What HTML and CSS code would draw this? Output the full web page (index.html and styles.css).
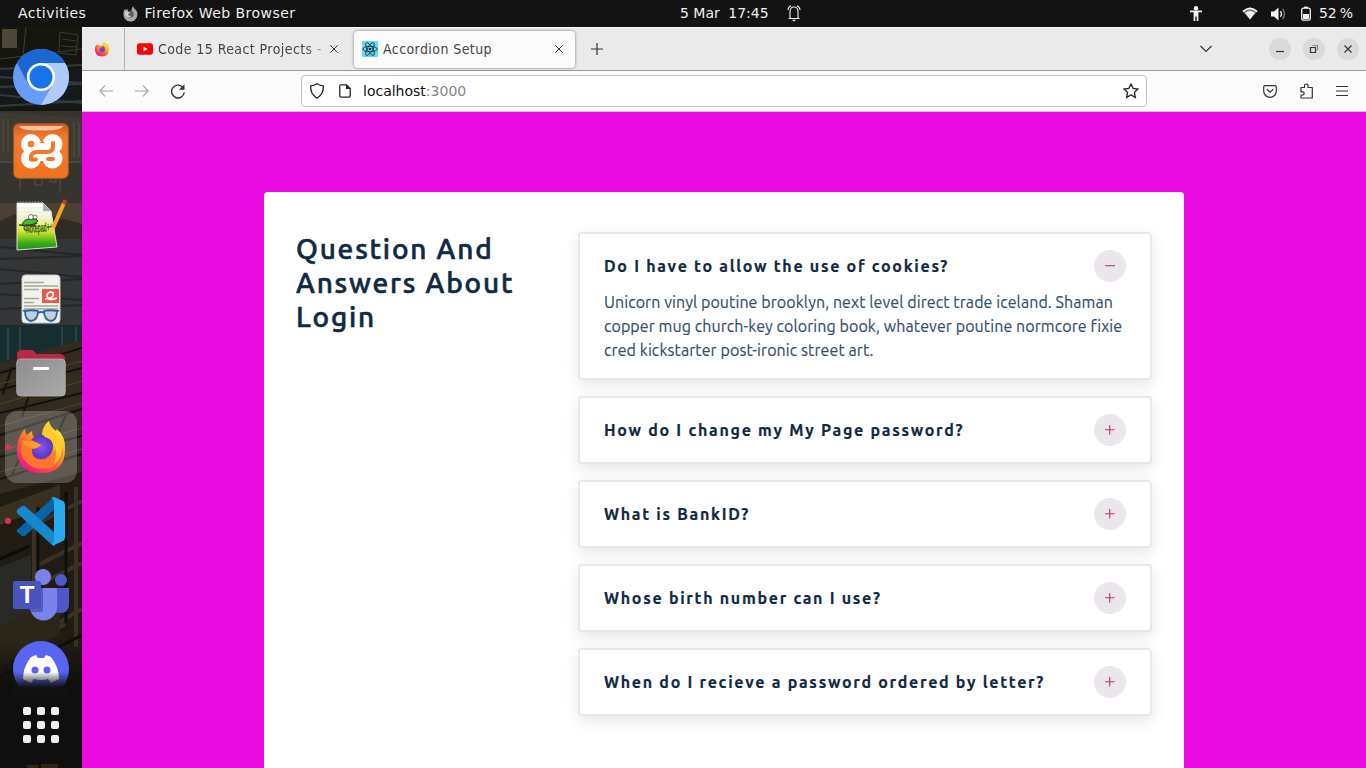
FILE: index.html
```html
<!DOCTYPE html>
<html lang="en">
<head>
<meta charset="utf-8">
<title>Accordion Setup</title>
<link rel="stylesheet" href="styles.css">
</head>
<body>
<div class="desktop">
  <header class="topbar">
    <div class="topbar-left">
      <span class="activities">Activities</span>
      <svg class="app-icon" width="16" height="16" viewBox="0 0 56 56"><path d="M5 29Q4 18 11 9l2 7q4-3 6-6l2 8q6-3 12 0-2-10 6-17 2 8 8 11 8 7 7 19a24 24 0 0 1-49-2z" fill="#a8a8a8"/><circle cx="29" cy="29" r="12" fill="#5b5b5b"/><path d="M11 19q9-3 18 6-5 3-9 2 2 9 13 8-9 9-18 1-7-7-4-17z" fill="#d0d0d0"/></svg>
      <span class="app-name">Firefox Web Browser</span>
    </div>
    <div class="topbar-center">
      <span class="clock">5 Mar <span class="time">17:45</span></span>
      <svg class="bell" width="14" height="17" viewBox="0 0 14 17" fill="none" stroke="#eee" stroke-width="1.1"><path d="M1.500 13.500h11M3 13V7q0-5 4-5t4 5v6M1 5q0-3 3-4.300M13 5q0-3-3-4.300"/><path d="M5.300 14.800h3.400q-.4 1.500-1.700 1.500t-1.700-1.500z" fill="#eee" stroke="none"/></svg>
    </div>
    <div class="topbar-right">
      <svg width="12" height="15" viewBox="0 0 12 15" fill="#f2f2f2"><circle cx="6" cy="2.200" r="2.200"/><path d="M0 4.600h12v1.700H8.400V15H6.700v-4.500H5.300V15H3.600V6.300H0z"/></svg>
      <svg class="wifi" width="16" height="13" viewBox="0 0 16 13"><path d="M.4 4Q8-3 15.600 4L8 12.600z" fill="#777"/><path d="M.4 4Q8-3 15.600 4l-1 1.200Q8-.5 1.400 5.200zM3 5.800q5-3.700 10 0L8 12.600z" fill="#f2f2f2"/></svg>
      <svg class="sound" width="15" height="14" viewBox="0 0 15 14"><path d="M0 4.500h3L7.500.5v13L3 9.500H0z" fill="#f2f2f2"/><path d="M9.500 4.200q2 2.800 0 5.600" fill="none" stroke="#eee" stroke-width="1.300"/><path d="M11.700 2q3.600 5 0 10" fill="none" stroke="#777" stroke-width="1.300"/></svg>
      <svg class="battery" width="10" height="15" viewBox="0 0 10 15"><path d="M3 .6h4v1.500h-4z" fill="#f2f2f2"/><rect x=".7" y="2.200" width="8.600" height="12" rx="1.700" fill="none" stroke="#f2f2f2" stroke-width="1.300"/><path d="M2 8h6v5H2z" fill="#f2f2f2"/></svg>
      <span class="percent">52 %</span>
    </div>
  </header>

  <div class="workspace">
    <nav class="dock">
      <svg class="wallpaper" width="82" height="741" viewBox="0 0 82 741">
        <rect width="82" height="741" fill="#15170f"/>
        <g stroke="#3e3b2e" fill="none"><path d="M0 32l82-10M22 38L26 0M60 5l18 3-2 20-17-2zM62 12l14 2M62 19l14 1"/></g>
        <path d="M2 2h15v19H2z" fill="#4d4637"/><path d="M0 42h82v38H0z" fill="#15191a"/>
        <g stroke="#30393b" stroke-width="2"><path d="M0 42l82-4M0 50l82 6M0 60l82-3M0 68l82 8M0 79l82-5"/></g>
        <path d="M0 84h82v92H0z" fill="#35342e"/><path d="M0 85l82 6v45H0z" fill="#3d3a32"/>
        <g stroke="#54504a" fill="none"><path d="M3 92v33M8 92v33M74 95v35M79 95v35M0 135h82M20 135v27M60 135v30M35 158h7v-9h-7zM50 155h6v-9h-6z"/></g>
        <path d="M0 176h82v42H0z" fill="#4b4033"/><path d="M0 194l26-12 56 15v21H0z" fill="#302b25"/>
        <path d="M0 212h82v86H0z" fill="#343536"/>
        <g stroke="#242627" stroke-width="2"><path d="M0 220l82 8M0 232l82-3M0 242l82 8M0 257l82-5M0 267l82 6M0 282l82-4"/></g>
        <path d="M0 298h82v41H0z" fill="#172d30"/><g stroke="#2c4245" stroke-width="2"><path d="M8 300v33M20 300v34M62 300v40M76 300v44"/></g>
        <path d="M0 336l82-23v152L0 490z" fill="#332b20"/>
        <g stroke="#11120f" stroke-width="2"><path d="M0 346l82-25M0 363l82-22M0 386l82-20M0 408l82-26M0 430l82-21M0 452l82-25M0 470l82-20M12 340l-9 27M55 330l-9 25M30 365l-8 25M67 385l-10 24M20 430l-9 20"/></g>
        <g stroke="#51432f" stroke-width="1"><path d="M0 357l82-23M0 377l82-23M0 399l82-23M0 424l82-23M0 445l82-23"/></g>
        <path d="M0 467l82-22v220L0 680z" fill="#201c13"/><path d="M0 480l60-22v17L0 498z" fill="#393020"/><path d="M0 540l31-12v90L0 635z" fill="#292a25"/>
        <g stroke="#3c3223" stroke-width="4" fill="none"><path d="M34 480v130l48-28M34 540l48-24M34 560l48-24M34 498l48-24M76 460v160M0 635l65-38"/></g>
        <g stroke="#0c0e0c" stroke-width="3"><path d="M38 480v130M66 465v130M0 532l30-13M0 650l82-42"/></g>
        <path d="M0 600L60 570v37L0 640z" fill="#2c2618"/>
        <path d="M0 657h82v84H0z" fill="#0e0f0e"/><path d="M27 738h11v3H27zM41 737h17v4H41z" fill="#302418"/>
        <defs><linearGradient id="shade" x2="0" y2="1"><stop stop-color="#0e0f0e" stop-opacity="0"/><stop offset="1" stop-color="#0e0f0e"/></linearGradient></defs><path d="M0 615h82v45H0z" fill="url(#shade)"/>
      </svg>
      <div class="dock-items">
        <div class="launcher"><svg width="56" height="56" viewBox="0 0 56 56"><defs><clipPath id="disc"><circle cx="28" cy="28" r="28"/></clipPath></defs><g clip-path="url(#disc)"><path d="M0 0h56v56H0z" fill="#689df6"/><path d="M4 14L16 36 28 14h28V0H0z" fill="#1967d2"/><path d="M28 14h28v42H28L40 35z" fill="#aecbfa"/></g><circle cx="28" cy="28" r="12.800" fill="#1a73e8" stroke="#fff" stroke-width="2.600"/></svg></div>
        <div class="launcher"><svg width="56" height="56" viewBox="0 0 56 56"><defs><linearGradient id="ora" x2="0" y2="1"><stop stop-color="#ce5a1d"/><stop offset=".25" stop-color="#f47b2c"/><stop offset="1" stop-color="#ef7220"/></linearGradient></defs><rect x=".7" y=".7" width="54.600" height="54.600" rx="5" fill="url(#ora)" stroke="#a85a28"/><path d="M6 3h44q-2 5-22 4.500Q8 8 6 3z" fill="#ffd9bd" opacity=".8"/><g fill="#fff"><circle cx="18" cy="21" r="10"/><circle cx="18" cy="35.500" r="10"/><circle cx="39.500" cy="21" r="10"/><circle cx="39.500" cy="35.500" r="10"/><path d="M18 18h22v20H18z"/></g><g fill="none" stroke="#f37826" stroke-width="4" stroke-linecap="round" stroke-linejoin="round"><path d="M18 36v-1q0-6 6-6h10q6 0 6-6v-3"/><path d="M18 36.500h5M35 36h5" stroke-width="4"/></g><circle cx="18" cy="21" r="3.300" fill="#f47b2c"/><path d="M26 20q3-4 6 0z" fill="#f47b2c"/></svg></div>
        <div class="launcher"><svg width="56" height="56" viewBox="0 0 56 56"><defs><linearGradient id="note" x2="0" y2="1"><stop stop-color="#fff"/><stop offset=".3" stop-color="#f3f8d2"/><stop offset=".6" stop-color="#d4e62c"/><stop offset=".85" stop-color="#3bad17"/><stop offset="1" stop-color="#168d12"/></linearGradient></defs><path d="M4 6h26l8 8 6 36L4 53z" fill="url(#note)" stroke="#ddd"/><path d="M30 6v8h8z" fill="#aaa"/><path d="M4 5h27" stroke="#777" stroke-width="2" stroke-dasharray="1 2"/><g stroke="#dbe8dc" stroke-width=".7"><path d="M5 11h26M5 15h33M5 19h34M5 23h34"/></g><path d="M9 29q1-8 10-7 5-1 6 2-4 4-9 4-5 0-5 4 1 3 4 1" fill="#45bc2b" stroke="#164a18" stroke-width="1"/><path d="M6 28l17 1M17 29l7-3" stroke="#4c3d19" stroke-width="1.400"/><circle cx="18" cy="20" r="2.500" fill="#fff" stroke="#222" stroke-width=".6"/><circle cx="22" cy="20" r="2" fill="#fff" stroke="#222" stroke-width=".6"/></svg><span class="note-word">Notepad++</span><svg class="pencil" width="56" height="56" viewBox="0 0 56 56"><path d="M40 31L51 6" stroke="#f5a719" stroke-width="4"/><path d="M38 35l0-5 4 2z" fill="#e4c394"/><path d="M50.500 7l2-4" stroke="#b83b48" stroke-width="4"/></svg></div>
        <div class="launcher"><svg width="56" height="56" viewBox="0 0 56 56"><rect x="9" y="4" width="38" height="48" rx="3.500" fill="#f1f1ee" stroke="#c8c9ca"/><g stroke="#aaa793" stroke-width="1.700"><path d="M11 11.500h20M11 15h34M11 18.500h15M11 27.500h15M11 31.500h10M11 35h34M11 38h34"/></g><path d="M29 18h17v14H29z" fill="#ef5849"/><path d="M32 28q10-1 8-6-4-3-6 2 0 7 10 3" fill="none" stroke="#fff" stroke-width="1.700"/><g fill="#c5cfd5" stroke="#2566ab" stroke-width="1.800"><path d="M12 40q7-1.500 13 0 0 9-7 10-6-1-6-10zM31 40q6-1.500 13 0 0 9-6 10-7-1-7-10z"/><path d="M10 39.500l3 1M25 42q3-2 6 0M43 40.500l3-1" fill="none"/></g></svg></div>
        <div class="launcher"><svg width="56" height="56" viewBox="0 0 56 56"><defs><linearGradient id="folder" x2="1" y2="1"><stop stop-color="#8d8d8d"/><stop offset="1" stop-color="#aaa"/></linearGradient></defs><path d="M4 28V10q0-5 4-5h10q3 0 5 4h24q5 0 5 5v14z" fill="#bb2746"/><rect x="3.700" y="14" width="48.600" height="37" rx="4" fill="url(#folder)" stroke="#bbb" stroke-width=".7"/><rect x="20" y="22" width="16" height="3" rx="1" fill="#fff"/></svg></div>
        <div class="launcher active"><i class="running"></i><svg width="56" height="56" viewBox="0 0 56 56"><defs><linearGradient id="fox" x1=".8" y1=".1" x2=".2" y2=".95"><stop stop-color="#ffe838"/><stop offset=".35" stop-color="#ffad25"/><stop offset=".6" stop-color="#ff5a37"/><stop offset="1" stop-color="#f5158a"/></linearGradient><radialGradient id="globe"><stop stop-color="#8a52f5"/><stop offset="1" stop-color="#5936b8"/></radialGradient></defs><path d="M4 30Q4 18 12 10q0 4 2 6 3-3 5-4 0 4 2 6 5 0 8 2-1-12 7-18 1 6 7 10l1-2q9 8 8 20 0 24-24 24T4 30z" fill="url(#fox)"/><circle cx="28" cy="28" r="12" fill="url(#globe)"/><path d="M9 21q9-2 19 5-3 4-9 4-1 10 9 11 12 0 14-11 0-9-9-12 17 3 17 17-2 13-17 15-15 2-24-12-3-8 0-17z" fill="#ff762f"/><path d="M32 18q-6-6 4-14 2 9 10 16 8 15-5 25 4-10 0-19-2-6-9-8z" fill="#ffc92e"/><path d="M10 23q6-3 14 1l4 2q-4 4-10 3-6-1-8-6z" fill="#ff9c2a"/></svg></div>
        <div class="launcher"><i class="running"></i><svg width="56" height="56" viewBox="0 0 56 56"><path d="M4 39l5 4q2 1 4-1l28-25V4L5 36q-2 1-1 3z" fill="#0865a4"/><path d="M4 17l5-4q2-1 4 1l29 26v13q-2 0-4-2L5 21q-2-2-1-4z" fill="#1788cc"/><path d="M38 5l3-1 9 4q2 1 2 4v31q0 4-2 5l-9 4-3-1q3 0 3-5V10q0-4-3-5z" fill="#28a9f0"/></svg></div>
        <div class="launcher"><svg width="56" height="56" viewBox="0 0 56 56"><circle cx="48" cy="13" r="6" fill="#5059c9"/><path d="M38 21h18v16q0 9-9 9-6 0-9-4z" fill="#4f58ca"/><circle cx="30" cy="10" r="8" fill="#7b83eb"/><path d="M17 21h27v19a13.500 13.500 0 0 1-27 0z" fill="#7b83eb"/><path d="M17 21h13v22q0 2-2 2H18z" fill="#555dbb"/><rect y="14" width="28" height="28" rx="2.500" fill="#4b53bc"/></svg><b class="teams-letter">T</b></div>
        <div class="launcher"><svg width="56" height="56" viewBox="0 0 56 56"><defs><linearGradient id="fade" x2="0" y2="1"><stop offset=".3" stop-color="#111" stop-opacity="0"/><stop offset=".74" stop-color="#101110"/></linearGradient></defs><circle cx="28" cy="28" r="28" fill="#5865f2"/><path d="M18 16l5-2 2 3h6l2-3 5 2q8 10 8 22l-8 4-3-4q-7 2-14 0l-3 4-8-4q0-12 8-22z" fill="#fff"/><circle cx="22" cy="29" r="3.500" fill="#5865f2"/><circle cx="34" cy="29" r="3.500" fill="#5865f2"/><path d="M0 20h56v36H0z" fill="url(#fade)"/></svg></div>
      </div>
      <div class="apps-grid"><i></i><i></i><i></i><i></i><i></i><i></i><i></i><i></i><i></i></div>
    </nav>

    <main class="browser">
      <div class="tabs">
        <div class="pinned"><svg width="16" height="16" viewBox="3 1 50 54"><path d="M4 30Q3 18 13 10q-1 4 1 6 3-3 6-4-1 4 1 6 4-1 7 1 0-12 8-17 1 5 6 8 1-1 1-3 9 7 9 19 0 27-24 27T4 30z"/><circle cx="28" cy="29" r="10" fill="#7542d8"/><path d="M12 21q6-1 9-3 4 0 7 5-3 4-10 4-1 11 9 12-12 1-15-8z"/></svg></div>
        <div class="tab">
          <svg width="16" height="16" viewBox="0 0 16 16"><rect y="2.300" width="16" height="11.400" rx="2.700" fill="#f00"/><path d="M6.400 5.600v4.800l4-2.400z"/></svg>
          <span class="tab-title first">Code 15 React Projects -</span>
          <svg class="close" width="8" height="8" viewBox="0 0 8 8"><path d="M.3.3l7.400 7.400M7.700.3L.3 7.700"/></svg>
        </div>
        <div class="tab selected">
          <svg width="16" height="16" viewBox="0 0 16 16"><rect width="16" height="16" rx="1" fill="#61dafb"/><g fill="none" stroke="#20232a" stroke-width=".8"><ellipse cx="8" cy="8" rx="7.200" ry="2.700"/><ellipse cx="8" cy="8" rx="7.200" ry="2.700" transform="rotate(60 8 8)"/><ellipse cx="8" cy="8" rx="7.200" ry="2.700" transform="rotate(120 8 8)"/></g><circle cx="8" cy="8" r="1.300" fill="#20232a"/></svg>
          <span class="tab-title second">Accordion Setup</span>
          <svg class="close" width="8" height="8" viewBox="0 0 8 8"><path d="M.3.3l7.400 7.400M7.700.3L.3 7.700"/></svg>
        </div>
        <svg class="new-tab" width="12" height="12" viewBox="0 0 12 12"><path d="M6 0v12M0 6h12"/></svg>
        <svg class="all-tabs" width="12" height="8" viewBox="0 0 12 8"><path d="M.5 1L6 6.500 11.500 1"/></svg>
        <div class="window-controls">
          <button><svg width="10" height="10" viewBox="0 0 10 10"><path d="M1 7.500h8"/></svg></button>
          <button><svg width="10" height="10" viewBox="0 0 10 10"><path d="M1.500 3.500h5v5h-5z"/><path class="back-window" d="M3.500 1.500h5v5"/></svg></button>
          <button><svg width="10" height="10" viewBox="0 0 10 10"><path d="M1.500 1.500l7 7M8.500 1.500l-7 7"/></svg></button>
        </div>
      </div>
      <div class="toolbar">
        <div class="nav-buttons">
          <svg class="dim" width="14" height="12" viewBox="0 0 14 12"><path d="M6 .7L.8 6 6 11.300M1 6h13"/></svg>
          <svg class="dim" width="14" height="12" viewBox="0 0 14 12"><path d="M8 .7L13.200 6 8 11.300M13 6H0"/></svg>
          <svg class="reload" width="16" height="16" viewBox="0 0 16 16"><path d="M12.500 4A6.400 6.400 0 1 0 14.300 9.500"/><path class="arrowhead" d="M14.500 1.300v5.500H9z"/></svg>
        </div>
        <div class="address">
          <svg width="16" height="16" viewBox="0 0 16 16"><path d="M8 .8q3 2 6.300 2Q15 11 8 15.200 1 11 1.700 2.800 5 2.800 8 .8z"/></svg>
          <svg class="page-icon" width="12" height="14" viewBox="0 0 12 14"><path d="M2 .8h5.500L11.200 4.500V12q0 1.200-1.200 1.200H2Q.8 13.200.8 12V2Q.8.8 2 .8z"/><path d="M7 .5v4.500h4.500z"/></svg>
          <span class="url">localhost<span class="port">:3000</span></span>
          <svg class="star" width="16" height="16" viewBox="0 0 16 16"><path d="M8 1l2.100 4.400 4.900.6-3.600 3.400 1 5L8 12l-4.400 2.400 1-5L1 6l4.900-.6z"/></svg>
        </div>
        <div class="toolbar-actions">
          <svg width="14" height="13" viewBox="0 0 14 13"><path d="M2 .7h10q1.300 0 1.300 1.300v4A6.300 6.300 0 0 1 .7 6V2Q.7.700 2 .7z"/><path d="M3.700 4.200L7 7.300l3.300-3.100"/></svg>
          <svg width="15" height="16" viewBox="0 0 15 16"><path d="M2 4.500h3.500V3q0-2 1.800-2T9 3v1.500h4.300V15H2v-3h1.500q1.600 0 1.600-1.600T3.500 8.800H2z" stroke-linejoin="round"/></svg>
          <svg width="12" height="12" viewBox="0 0 12 12"><path d="M0 1.500h12M0 6h12M0 10.500h12"/></svg>
        </div>
      </div>
      <section class="viewport">
        <div class="panel">
          <h1>Question And Answers About Login</h1>
          <div class="questions">
            <article>
              <div class="question-row"><h2>Do I have to allow the use of cookies?</h2><button class="toggle"><svg width="10" height="10" viewBox="0 0 10 10"><path d="M0 4.700h10"/></svg></button></div>
              <p>Unicorn vinyl poutine brooklyn, next level direct trade iceland. Shaman copper mug church-key coloring book, whatever poutine normcore fixie cred kickstarter post-ironic street art.</p>
            </article>
            <article><div class="question-row"><h2>How do I change my My Page password?</h2><button class="toggle"><svg width="10" height="10" viewBox="0 0 10 10"><path d="M4.700 0v9.500M0 4.700h9.500"/></svg></button></div></article>
            <article><div class="question-row"><h2>What is BankID?</h2><button class="toggle"><svg width="10" height="10" viewBox="0 0 10 10"><path d="M4.700 0v9.500M0 4.700h9.500"/></svg></button></div></article>
            <article><div class="question-row"><h2>Whose birth number can I use?</h2><button class="toggle"><svg width="10" height="10" viewBox="0 0 10 10"><path d="M4.700 0v9.500M0 4.700h9.500"/></svg></button></div></article>
            <article><div class="question-row"><h2>When do I recieve a password ordered by letter?</h2><button class="toggle"><svg width="10" height="10" viewBox="0 0 10 10"><path d="M4.700 0v9.500M0 4.700h9.500"/></svg></button></div></article>
          </div>
        </div>
      </section>
    </main>
  </div>
</div>
</body>
</html>
```

FILE: styles.css
```css
* { box-sizing: border-box; }
html, body { margin: 0; height: 100%; overflow: hidden; }
body { font-family: "DejaVu Sans", sans-serif; }
svg { display: block; flex: none; }
button { border: 0; padding: 0; display: grid; place-items: center; }
.desktop { width: 1366px; height: 768px; display: flex; flex-direction: column; overflow: hidden; }

.topbar { height: 27px; flex: none; background: #131313; color: #f0f0f0; display: grid; grid-template-columns: 680px 1fr auto; font-size: 14px; line-height: 27px; white-space: nowrap; }
.topbar > div { display: flex; align-items: center; }
.topbar-left { padding-left: 18px; letter-spacing: .45px; }
.app-icon { margin: 0 6px 0 36px; }
.time { margin-left: 4px; }
.bell { margin-left: 18px; }
.topbar-right { padding-right: 13px; }
.wifi { margin-left: 40px; }
.sound { margin-left: 13px; }
.battery { margin: 0 8px 0 15px; }
.percent { word-spacing: -1.500px; }

.workspace { display: flex; flex: 1; min-height: 0; }
.dock { width: 82px; flex: none; position: relative; overflow: hidden; }
.wallpaper { position: absolute; inset: 0; }
.dock-items { position: relative; padding: 14px 5px 0; display: flex; flex-direction: column; gap: 2px; }
.launcher { width: 72px; height: 72px; border-radius: 12px; display: grid; place-items: center; position: relative; }
.launcher.active { background: rgba(255, 255, 255, .22); }
.running { position: absolute; left: 0; top: 33px; width: 6px; height: 6px; border-radius: 50%; background: #da3450; }
.teams-letter { position: absolute; left: 8px; top: 22px; width: 28px; text-align: center; color: #fff; font: bold 24px/28px "Liberation Sans", sans-serif; }
.note-word { position: absolute; left: 21px; top: 33px; font: bold 13px/14px "Liberation Sans", sans-serif; color: #28541c; transform: rotate(-4deg) scaleX(.4); transform-origin: left center; }
.pencil { position: absolute; left: 8px; top: 8px; }
.apps-grid { position: relative; width: 36px; margin: 2px auto 0; display: grid; grid-template-columns: repeat(3, 8px); gap: 6px; }
.apps-grid i { width: 8px; height: 8px; border-radius: 2px; background: #eee; }

.browser { flex: 1; min-width: 0; display: flex; flex-direction: column; }
.tabs { height: 44px; flex: none; background: #eaeaea; border-bottom: 1px solid #9d9d9d; border-top: 1px solid #f8f8f8; display: flex; align-items: center; }
.tabs path, .toolbar path { fill: none; stroke: #333; stroke-width: 1.2; }
.pinned { width: 43px; height: 42px; border-right: 1px solid #b3b3b3; display: flex; align-items: center; padding-left: 12px; }
.pinned path:nth-of-type(1) { fill: url(#fox); stroke: none; }
.pinned path:nth-of-type(2) { fill: #ff8b24; stroke: none; }
.tab { width: 229px; height: 37px; display: flex; align-items: center; padding: 0 16px 0 12px; gap: 5px; }
.tab path { stroke-width: 1; }
.tab:not(.selected) > svg:first-child path { fill: #fff; stroke: none; }
.tab.selected { width: 221px; padding: 0 12px 0 8px; background: #fbfbfb; border-radius: 4px; box-shadow: 0 0 3px rgba(0, 0, 0, .5); }
.tab-title { flex: 1; min-width: 0; white-space: nowrap; font-family: "DejaVu Sans Condensed", "DejaVu Sans", sans-serif; font-stretch: condensed; font-size: 14px; letter-spacing: .42px; color: #454545; line-height: 20px; }
.tab-title.first { mask-image: linear-gradient(to right, #000 146px, transparent 174px); }
.new-tab { margin-left: 16px; }
.all-tabs { margin-left: auto; }
.window-controls { display: flex; gap: 12px; padding: 0 7px 0 57px; }
.window-controls button { width: 22px; height: 22px; border-radius: 50%; background: #dadada; }
.window-controls .back-window { stroke: #888; }
.toolbar { height: 41px; flex: none; background: #fbfbfb; border-bottom: 1px solid #cacaca; display: grid; grid-template-columns: 219px 846px 1fr; align-items: center; }
.nav-buttons { display: flex; align-items: center; padding-left: 17px; gap: 22px; }
.dim { opacity: .42; }
.reload { margin-left: -1px; }
.reload path { stroke-width: 1.4; }
.reload .arrowhead { fill: #333; stroke: none; }
.address { height: 32px; background: #fff; border: 1px solid #c2c2c2; border-radius: 4px; display: flex; align-items: center; padding: 0 7px; }
.address path { stroke: #222; stroke-width: 1.3; }
.page-icon { margin: 0 12px 0 14px; }
.page-icon path:last-child { fill: #222; stroke: none; }
.url { font-size: 14px; color: #111; line-height: 20px; }
.port { color: #858585; }
.star { margin-left: auto; }
.toolbar-actions { display: flex; justify-content: flex-end; align-items: center; gap: 22px; padding-right: 18px; }

.viewport { flex: 1; min-height: 0; background: #e80ce0; padding: 80px 182px 0; overflow: hidden; }
.panel { height: 700px; background: #fff; border-radius: 4px; padding: 40px 32px; display: grid; grid-template-columns: 250px minmax(0, 1fr); gap: 32px; font-family: "Ubuntu", "Noto Sans", sans-serif; }
h1 { margin: 0; color: #102a42; font-size: 28px; font-weight: 500; line-height: 34px; letter-spacing: 1.8px; -webkit-text-stroke: .6px #102a42; }
.questions { display: flex; flex-direction: column; gap: 16px; }
article { border: 2px solid #eae6eb; border-radius: 4px; padding: 16px 24px; background: #fff; box-shadow: 0 5px 15px rgba(0, 0, 0, .1); }
.question-row { display: flex; justify-content: space-between; align-items: center; height: 32px; }
h2 { margin: 0; font-size: 16px; font-weight: 700; color: #102a42; line-height: 24px; letter-spacing: 1.71px; white-space: nowrap; -webkit-text-stroke: .2px #102a42; }
.toggle { width: 32px; height: 32px; border-radius: 50%; background: #eae6eb; }
.toggle path { stroke: #ba3a68; stroke-width: 1.1; }
article p { margin: 8px 0 0; font-size: 16px; line-height: 24px; letter-spacing: .08px; color: #324d67; -webkit-text-stroke: .15px #324d67; }
```
